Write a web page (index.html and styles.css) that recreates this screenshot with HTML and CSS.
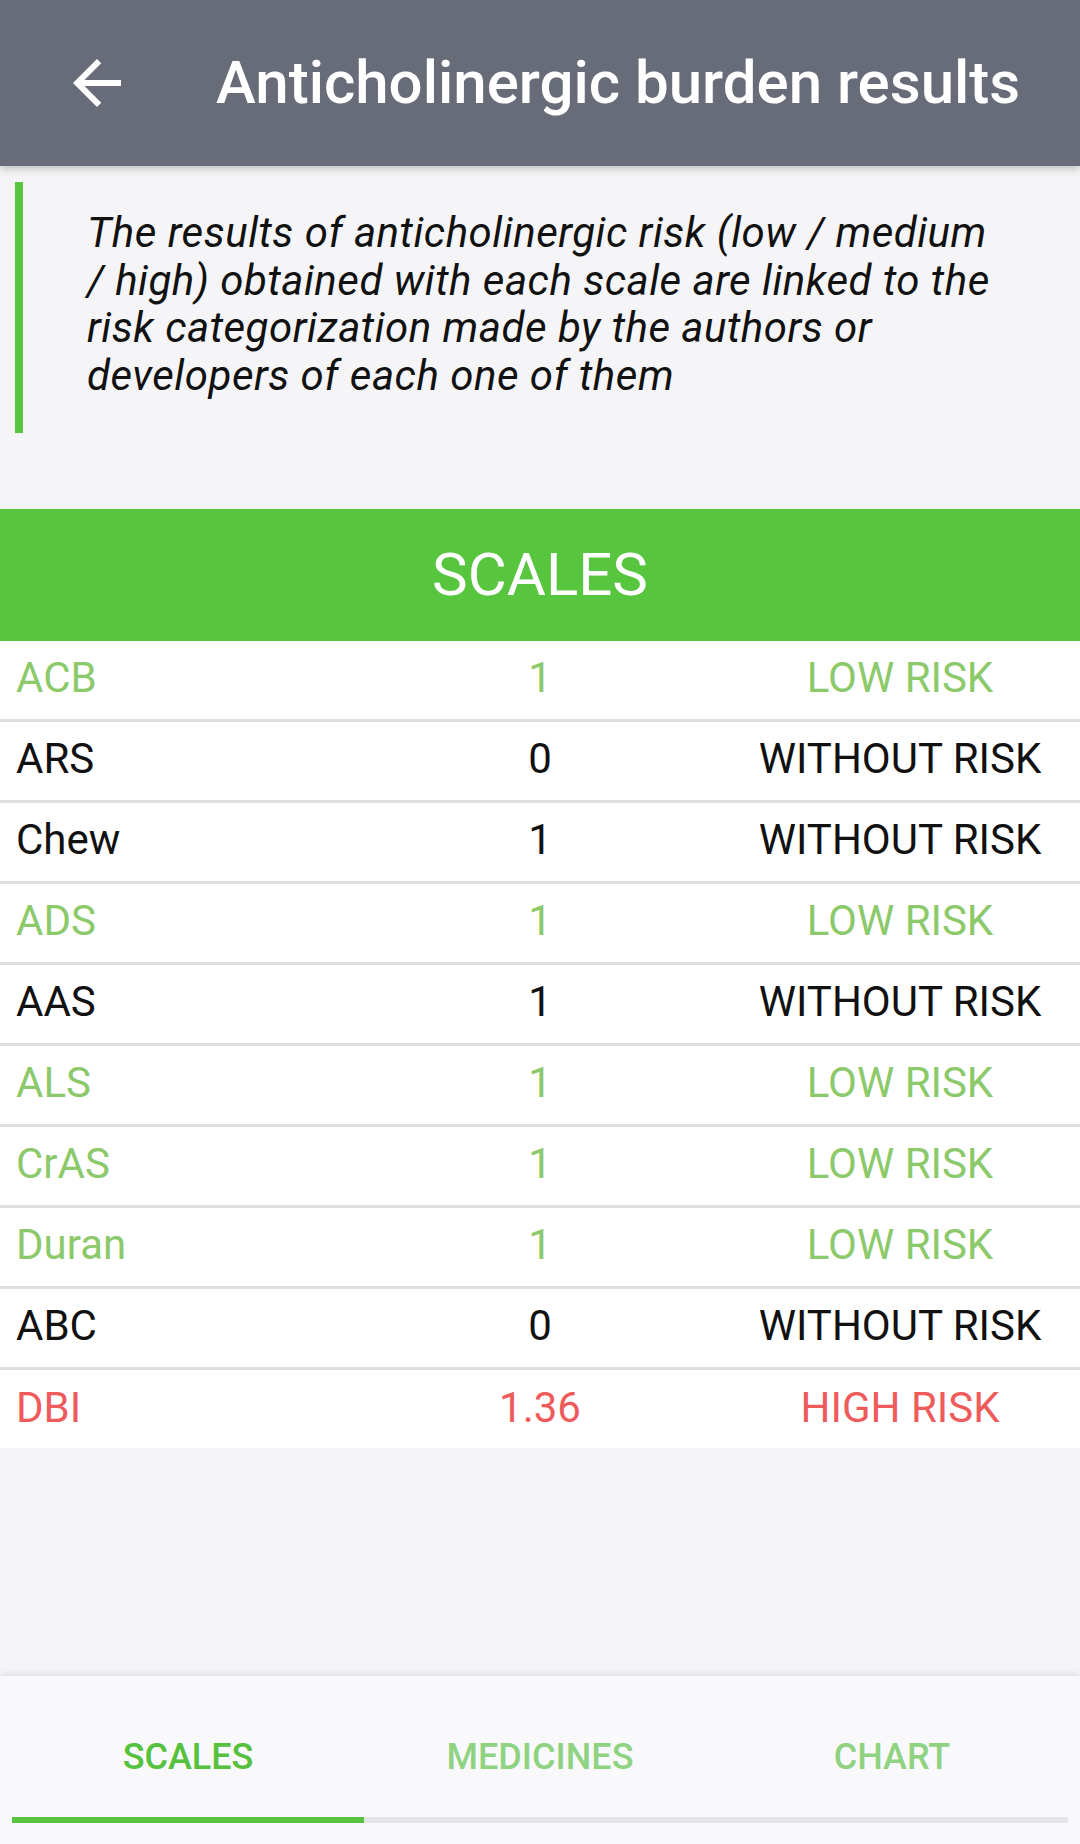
FILE: index.html
```html
<!DOCTYPE html>
<html lang="en">
<head>
<meta charset="utf-8">
<title>Anticholinergic burden results</title>
<link rel="stylesheet" href="styles.css">
</head>
<body>
<div class="app">
  <header class="toolbar">
    <span class="back">
      <svg viewBox="0 0 24 24" width="72" height="72" aria-hidden="true"><path d="M20 11H7.83l5.59-5.59L12 4l-8 8 8 8 1.41-1.41L7.83 13H20v-2z" fill="#ffffff"/></svg>
    </span>
    <h1 class="title">Anticholinergic burden results</h1>
  </header>

  <main class="content">
    <blockquote class="note">The results of anticholinergic risk (low / medium<br>/ high) obtained with each scale are linked to the<br>risk categorization made by the authors or<br>developers of each one of them</blockquote>

    <section class="scales">
      <div class="banner">SCALES</div>
      <div class="rows">
        <div class="row low"><span class="c1">ACB</span><span class="c2">1</span><span class="c3">LOW RISK</span></div>
        <div class="row none"><span class="c1">ARS</span><span class="c2">0</span><span class="c3">WITHOUT RISK</span></div>
        <div class="row none"><span class="c1">Chew</span><span class="c2">1</span><span class="c3">WITHOUT RISK</span></div>
        <div class="row low"><span class="c1">ADS</span><span class="c2">1</span><span class="c3">LOW RISK</span></div>
        <div class="row none"><span class="c1">AAS</span><span class="c2">1</span><span class="c3">WITHOUT RISK</span></div>
        <div class="row low"><span class="c1">ALS</span><span class="c2">1</span><span class="c3">LOW RISK</span></div>
        <div class="row low"><span class="c1">CrAS</span><span class="c2">1</span><span class="c3">LOW RISK</span></div>
        <div class="row low"><span class="c1">Duran</span><span class="c2">1</span><span class="c3">LOW RISK</span></div>
        <div class="row none"><span class="c1">ABC</span><span class="c2">0</span><span class="c3">WITHOUT RISK</span></div>
        <div class="row high"><span class="c1">DBI</span><span class="c2">1.36</span><span class="c3">HIGH RISK</span></div>
      </div>
    </section>
  </main>

  <nav class="tabs">
    <div class="tab active"><span class="label">SCALES</span><span class="bar"></span></div>
    <div class="tab"><span class="label">MEDICINES</span><span class="bar"></span></div>
    <div class="tab"><span class="label">CHART</span><span class="bar"></span></div>
  </nav>
</div>
</body>
</html>
```

FILE: styles.css
```css
* { box-sizing: border-box; }

html, body {
  margin: 0;
  padding: 0;
}

body {
  width: 1080px;
  height: 1844px;
  background: #f5f5f7;
  font-family: Roboto, "Liberation Sans", sans-serif;
  overflow: hidden;
}

.app {
  height: 1844px;
  display: flex;
  flex-direction: column;
}

.toolbar {
  position: relative;
  z-index: 2;
  flex: 0 0 166px;
  height: 166px;
  background: #686c78;
  display: flex;
  align-items: center;
  box-shadow: 0 3px 8px rgba(0, 0, 0, 0.22);
}

.back {
  display: flex;
  width: 72px;
  height: 72px;
  margin-left: 61px;
}

.title {
  margin: 0 0 0 83px;
  color: #ffffff;
  font-size: 60px;
  font-weight: 500;
  line-height: 70px;
  white-space: nowrap;
}

.content {
  flex: 1 1 auto;
  display: flex;
  flex-direction: column;
}

.note {
  margin: 16px 0 0 15px;
  border-left: 8px solid #58c43f;
  padding: 27px 0 33px 64px;
  font-style: italic;
  font-size: 42px;
  letter-spacing: 0.5px;
  line-height: 47.7px;
  color: #111111;
  white-space: nowrap;
}

.scales {
  margin-top: 76px;
}

.banner {
  height: 132px;
  background: #58c53f;
  color: #ffffff;
  font-size: 60px;
  display: flex;
  align-items: center;
  justify-content: center;
}

.rows {
  background: #ffffff;
}

.row {
  height: 81px;
  display: grid;
  grid-template-columns: 360px 360px 360px;
  align-items: center;
  padding-bottom: 4px;
  border-bottom: 3px solid #dedede;
  font-size: 42px;
  color: #111111;
}

.row:last-child {
  height: 78px;
  border-bottom: none;
  padding-bottom: 3px;
}

.c1 { padding-left: 16px; }
.c2, .c3 { text-align: center; }

.row.low { color: #8cc96b; }
.row.high { color: #ef5b5b; }

.tabs {
  position: relative;
  z-index: 2;
  flex: 0 0 168px;
  height: 168px;
  background: #f9f9fb;
  display: flex;
  padding: 0 12px 21px;
  box-shadow: 0 -3px 6px rgba(0, 0, 0, 0.08);
}

.tab {
  flex: 1 1 0;
  display: flex;
  flex-direction: column;
}

.label {
  flex: 1 1 auto;
  padding-top: 20px;
  display: flex;
  align-items: center;
  justify-content: center;
  font-size: 36px;
  font-weight: 500;
  color: #8fd382;
}

.bar {
  height: 6px;
  background: #e5e5e8;
}

.tab.active .label { color: #55c13c; }
.tab.active .bar { background: #58c43f; }
```
